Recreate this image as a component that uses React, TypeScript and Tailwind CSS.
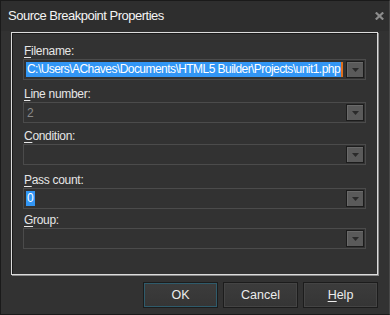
import React from "react";

const font = { fontFamily: '"Liberation Sans", Arial, sans-serif' };

function U({ c }: { c: string }) {
  return <span className="underline underline-offset-[2px]">{c}</span>;
}

function Combo({ children, disabled }: { children?: React.ReactNode; disabled?: boolean }) {
  return (
    <div className="h-[21px] w-[343px] border border-[#4b4b4b] bg-[#323232] flex items-center relative">
      <div className={"flex-1 min-w-0 h-full flex items-center pl-[2px] " + (disabled ? "text-[#8a8a8a]" : "text-white")}>
        {children}
      </div>
      <div className="w-[18px] h-[17px] mr-[1px] shrink-0 border border-[#1c1c1c] bg-[#5a5a5a] shadow-[inset_1px_1px_0_#6a6a6a] flex items-center justify-center">
        <svg width="7" height="4" viewBox="0 0 7 4">
          <path d="M0 0H7L3.5 4Z" fill="#2a2a2a" />
        </svg>
      </div>
    </div>
  );
}

function Label({ first, rest, mt }: { first: string; rest: string; mt: string }) {
  return (
    <div className={"h-[16px] leading-[16px] text-[12px] tracking-[-0.3px] text-[#e6e6e6] pl-[1px] " + mt}>
      <U c={first} />
      {rest}
    </div>
  );
}

function Btn({ children, focus }: { children: React.ReactNode; focus?: boolean }) {
  return (
    <div
      className={
        "w-[75px] h-[26px] border border-[#1c1c1c] bg-gradient-to-b from-[#3c3c3c] to-[#353535] flex items-center justify-center text-[12.5px] text-[#ececec] " +
        (focus ? "shadow-[inset_0_0_0_1px_#2f5b6b]" : "shadow-[inset_0_0_0_1px_#444]")
      }
    >
      {children}
    </div>
  );
}

export default function App() {
  return (
    <div
      className="w-[390px] h-[315px] bg-[#323232] border border-[#1a1a1a] border-r-[#484848] border-b-[#1a1a1a] flex flex-col"
      style={font}
    >
      <div className="h-[30px] flex items-center justify-between pl-[7px] pr-[5px] bg-[#2e2e2e]">
        <span className="text-[13px] tracking-[-0.5px] text-[#f4f4f4]">Source Breakpoint Properties</span>
        <svg width="9" height="8" viewBox="0 0 9 8">
          <path d="M0.8 0.5L8.2 7.5M8.2 0.5L0.8 7.5" stroke="#8c8c8c" strokeWidth="2.2" />
        </svg>
      </div>
      <div className="ml-[10px] mt-[1px] w-[367px] h-[243px] border border-[#dcdcdc] shadow-[1px_1px_0_#8a8a8a,inset_1px_1px_0_#1a1a1a] pl-[11px] pt-[10px] flex flex-col">
        <Label first="F" rest="ilename:" mt="" />
        <Combo>
          <span className="relative h-[15px] leading-[15px] bg-[#3296f5] text-white text-[12px] tracking-[-0.55px] pl-[1px] pr-[1px] whitespace-nowrap">
            C:\Users\AChaves\Documents\HTML5 Builder\Projects\unit1.php
            <span className="absolute right-[-2px] top-0 w-[2px] h-[15px] bg-[#e0701c]" />
          </span>
        </Combo>
        <Label first="L" rest="ine number:" mt="mt-[6px]" />
        <Combo disabled>
          <span className="text-[12px] pl-[1px]">2</span>
        </Combo>
        <Label first="C" rest="ondition:" mt="mt-[5px]" />
        <Combo disabled />
        <Label first="P" rest="ass count:" mt="mt-[7px]" />
        <Combo>
          <span className="h-[15px] leading-[15px] bg-[#3296f5] text-white text-[12px] px-[1px]">0</span>
        </Combo>
        <Label first="G" rest="roup:" mt="mt-[3px]" />
        <Combo disabled />
      </div>
      <div className="flex justify-end gap-[5px] pr-[11px] mt-[7px]">
        <Btn focus>OK</Btn>
        <Btn>Cancel</Btn>
        <Btn>
          <U c="H" />
          elp
        </Btn>
      </div>
    </div>
  );
}
